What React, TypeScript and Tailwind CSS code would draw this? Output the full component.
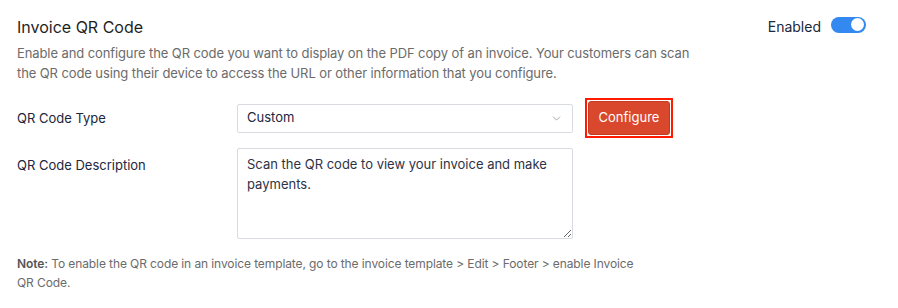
import { ChevronDown } from "lucide-react";

export default function App() {
  return (
    <div className="h-[308px] w-[898px] bg-white font-['Inter',sans-serif] text-[#212529]">
      <div className="px-[17px] pt-[16px]">
        <div className="flex items-center justify-between">
          <h2 className="text-[16px] leading-[22px] text-[#1f1f1f]">Invoice QR Code</h2>
          <div className="mr-[15px] flex items-center gap-[10px]">
            <span className="-mt-[2px] text-[14px] text-[#21263c]">Enabled</span>
            <span className="relative -mt-[5px] inline-block h-[16px] w-[35px] rounded-full bg-[#3389f0]">
              <span className="absolute right-[2px] top-[1.5px] h-[13px] w-[13px] rounded-full bg-white" />
            </span>
          </div>
        </div>

        <p className="mt-[5px] w-[680px] text-[13px] leading-[20px] tracking-[-0.1px] text-[#6b6b6b]">
          Enable and configure the QR code you want to display on the PDF copy of an invoice. Your customers can scan
          <br />
          the QR code using their device to access the URL or other information that you configure.
        </p>

        <div className="mt-[15px] flex items-center">
          <label className="w-[220px] pt-[2px] text-[13px] text-[#21263c]">QR Code Type</label>
          <div className="flex h-[29px] w-[336px] items-center justify-between rounded-[2px] border border-[#d8dbe0] bg-white pl-[9px] pr-[9px]">
            <span className="text-[13px] text-[#21263c]">Custom</span>
            <ChevronDown size={13} strokeWidth={1.8} className="text-[#a8a8a8]" />
          </div>
          <div className="ml-[12px] border-2 border-[#ff1a00] p-px">
            <button className="h-[34px] w-[82px] rounded-[3px] border border-[#c43a22] bg-[#d9482c] text-[13px] text-white">
              Configure
            </button>
          </div>
        </div>

        <div className="mt-[10px] flex items-start">
          <label className="w-[220px] pt-[8px] text-[13px] text-[#21263c]">QR Code Description</label>
          <textarea
            className="h-[91px] w-[336px] rounded-[2px] border border-[#d8dbe0] px-[9px] py-[5px] text-[13px] leading-[20px] text-[#2e3345] outline-none"
            defaultValue="Scan the QR code to view your invoice and make payments."
          />
        </div>

        <p className="mt-[15px] w-[680px] text-[12px] leading-[19px] tracking-[-0.1px] text-[#6b6b6b]">
          <span className="font-semibold text-[#555]">Note:</span> To enable the QR code in an invoice template, go to the
          invoice template &gt; Edit &gt; Footer &gt; enable Invoice
          <br />
          QR Code.
        </p>
      </div>
    </div>
  );
}
